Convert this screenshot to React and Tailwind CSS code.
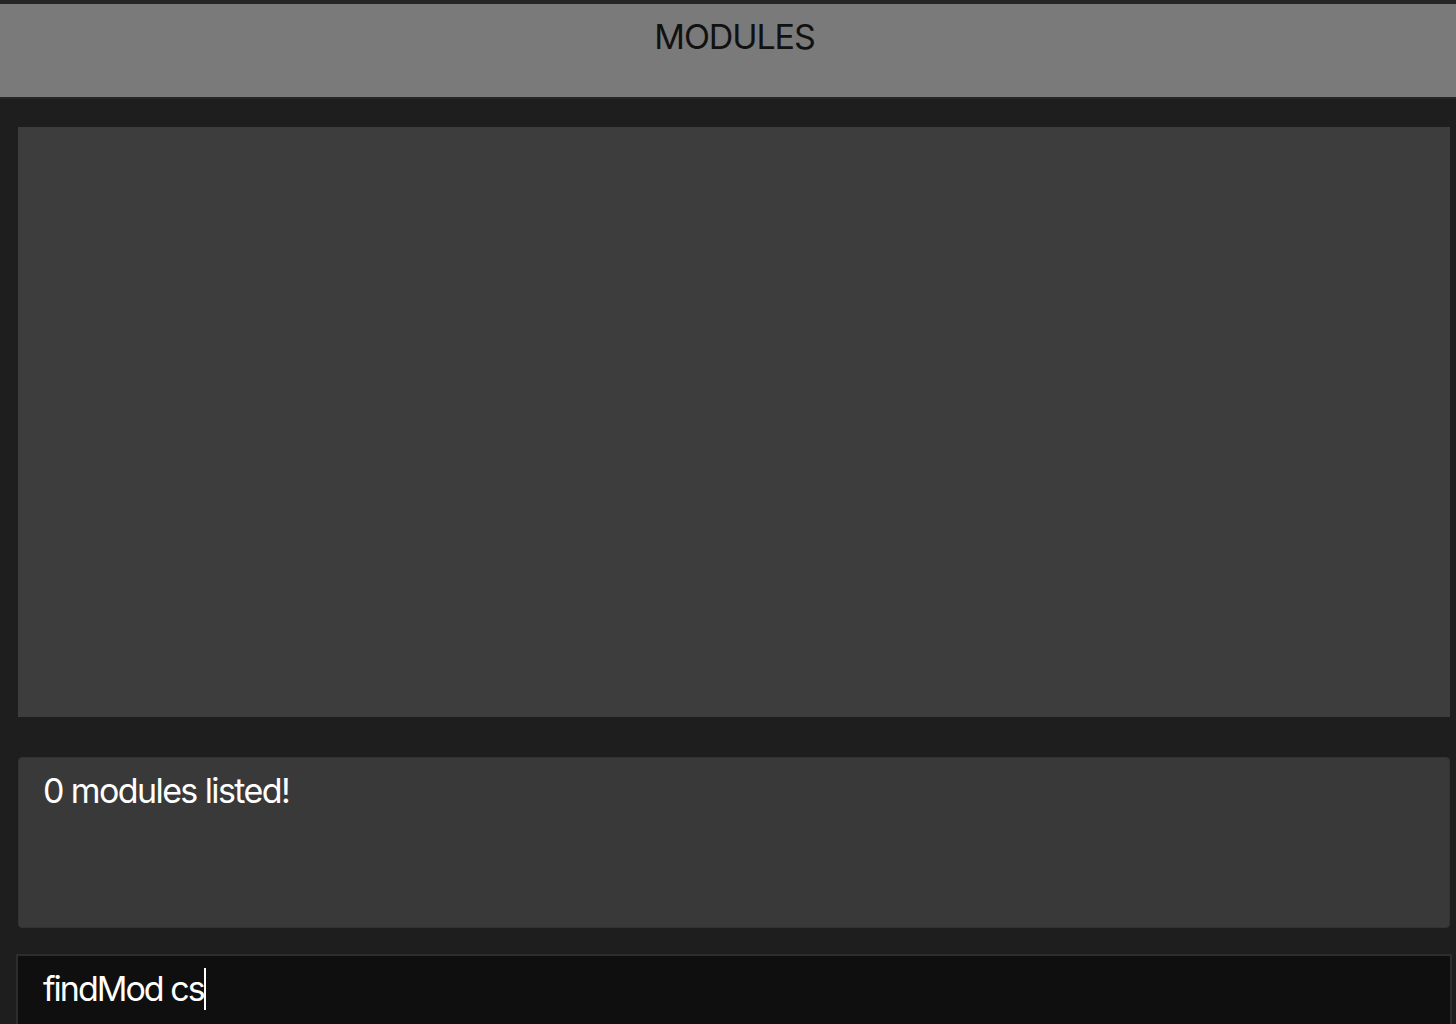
export default function App() {
  return (
    <div
      className="w-[1456px] h-[1024px] overflow-hidden bg-[#1e1e1e] flex flex-col"
      style={{ fontFamily: "Inter, 'Noto Sans', sans-serif" }}
    >
      {/* header */}
      <div className="h-[99px] shrink-0 border-t-4 border-b-2 border-t-[#262626] border-b-[#262626] bg-[#7a7a7a] flex justify-center pl-[13px]">
        <span className="text-[34px] leading-none text-[#111111] mt-[16px] tracking-[-1.1px]">MODULES</span>
      </div>

      {/* module list */}
      <div className="mt-[28px] ml-[18px] mr-[6px] h-[590px] shrink-0 bg-[#3d3d3d]" />

      {/* status */}
      <div className="mt-[40px] ml-[18px] mr-[6px] h-[171px] shrink-0 rounded-[4px] border border-[#333333] bg-[#393939] px-[24px] pt-[13px]">
        <p className="text-[34px] leading-[1.2] text-white tracking-[-1.6px]">0 modules listed!</p>
      </div>

      {/* command input */}
      <div className="mt-[26px] ml-[16px] mr-[4px] flex-1 border-2 border-b-0 border-[#2d2d2d] bg-[#0f0f0f] px-[25px] pt-[12px]">
        <div className="flex items-center text-[34px] leading-[1.2] text-white tracking-[-2px]">
          <span>findMod cs</span>
          <span className="w-[2px] h-[42px] bg-white" />
        </div>
      </div>
    </div>
  );
}
